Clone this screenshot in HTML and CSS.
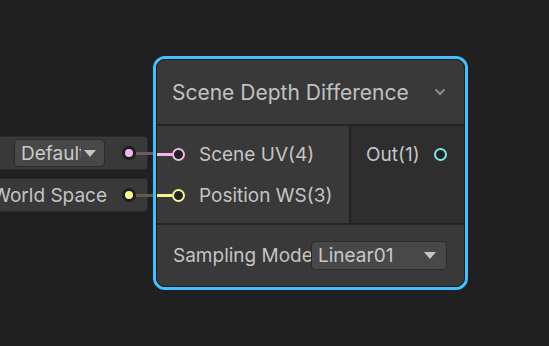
FILE: index.html
```html
<!DOCTYPE html>
<html>
<head>
    <title>Scene Depth Difference</title>
    <link rel="stylesheet" href="styles.css">
</head>
<body>
    <div class="canvas">
        <div class="stubs">
            <div class="stub">
                <div class="dropdown small">
                    <span class="dd-text">Default</span>
                    <span class="tri"></span>
                </div>
                <span class="dot pink"></span>
                <span class="wire pink-dim"></span>
            </div>
            <div class="stub">
                <span class="stub-label">World Space</span>
                <span class="dot yellow"></span>
                <span class="wire yellow-dim"></span>
            </div>
        </div>

        <div class="node">
            <div class="node-inner">
                <div class="header">
                    <span class="title">Scene Depth Difference</span>
                    <svg class="chevron" width="12" height="8" viewBox="0 0 12 8">
                        <polyline points="1.5,1.5 6,6 10.5,1.5" fill="none" stroke="#8c8c8c" stroke-width="2"/>
                    </svg>
                </div>
                <div class="ports">
                    <div class="inputs">
                        <div class="port-row">
                            <span class="edge pink-line"></span>
                            <span class="port pink-ring"></span>
                            <span class="port-label">Scene UV(4)</span>
                        </div>
                        <div class="port-row">
                            <span class="edge yellow-line"></span>
                            <span class="port yellow-ring"></span>
                            <span class="port-label">Position WS(3)</span>
                        </div>
                    </div>
                    <div class="outputs">
                        <div class="port-row out">
                            <span class="port-label">Out(1)</span>
                            <span class="port cyan-ring"></span>
                        </div>
                    </div>
                </div>
                <div class="settings">
                    <span class="setting-label">Sampling Mode</span>
                    <div class="dropdown wide">
                        <span class="dd-text">Linear01</span>
                        <span class="tri"></span>
                    </div>
                </div>
            </div>
        </div>
    </div>
</body>
</html>
```

FILE: styles.css
```css
body { margin: 0; background: #202020; font-family: Inter, "Noto Sans", sans-serif; color: #c4c4c4; overflow: hidden; }
.canvas { position: relative; width: 549px; height: 346px; }

/* inline value stubs left of the node */
.stubs { position: absolute; left: -10px; top: 136px; width: 158px; display: flex; flex-direction: column; gap: 8px; }
.stub { position: relative; height: 34px; box-sizing: border-box; background: #393939; border: 1px solid #2a2a2a; border-left: none; border-radius: 0 4px 4px 0; display: flex; align-items: center; justify-content: flex-end; padding-right: 11px; font-size: 19px; }
.stub-label { margin-right: 15px; white-space: nowrap; }
.dot { position: relative; z-index: 2; width: 14px; height: 14px; border-radius: 50%; background: #1f1f1f; display: flex; align-items: center; justify-content: center; }
.dot::after { content: ""; width: 8px; height: 8px; border-radius: 50%; }
.dot.pink::after { background: #f4b6ea; }
.dot.yellow::after { background: #f4f58e; }
.wire { position: absolute; left: calc(100% - 11px); top: 50%; margin-top: -1.5px; width: 20px; height: 3px; z-index: 1; }
.pink-dim { background: #6c5a68; }
.yellow-dim { background: #5e5e47; }

.dropdown { box-sizing: border-box; background: #484848; border: 1px solid #2b2b2b; border-radius: 4px; display: flex; align-items: center; padding-left: 6px; font-size: 19px; color: #c8c8c8; }
.dropdown .dd-text { flex: 1; overflow: hidden; white-space: nowrap; }
.tri { width: 0; height: 0; border-left: 6px solid transparent; border-right: 6px solid transparent; border-top: 7px solid #c4c4c4; margin-left: 3px; }
.small { width: 91px; height: 28px; margin-right: 17px; padding-right: 8px; }
.wide { width: 136px; height: 29px; padding-right: 10px; flex-shrink: 0; }

/* node */
.node { position: absolute; left: 153px; top: 56px; width: 315px; height: 234px; box-sizing: border-box; border: 3px solid #44c0ff; border-radius: 12px; z-index: 3; }
.node-inner { height: 100%; box-sizing: border-box; border: 1px solid #1b1b1b; border-radius: 9px; overflow: hidden; display: flex; flex-direction: column; }
.header { height: 64px; flex-shrink: 0; background: #393939; border-bottom: 2px solid #232323; display: flex; align-items: center; padding-left: 15px; padding-right: 18px; }
.title { font-size: 21px; color: #c1c1c1; white-space: nowrap; }
.chevron { margin-left: auto; }

.ports { height: 97px; flex-shrink: 0; display: flex; }
.inputs { width: 192px; background: #393939; border-right: 2px solid #232323; padding-top: 8px; }
.outputs { flex: 1; background: #2e2e2e; padding-top: 8px; }
.port-row { height: 41px; display: flex; align-items: center; font-size: 19px; }
.port-label { white-space: nowrap; }
.edge { width: 15px; height: 3px; }
.pink-line { background: #f4b6ea; }
.yellow-line { background: #f4f58e; }
.port { width: 13px; height: 13px; box-sizing: border-box; border-radius: 50%; border: 2px solid; background: #232323; margin-right: 14px; }
.pink-ring { border-color: #f4b6ea; }
.yellow-ring { border-color: #f4f58e; }
.out { padding-left: 15px; padding-right: 17px; }
.out .port { margin: 0 0 0 auto; }
.cyan-ring { border-color: #84e3e8; }

.settings { flex: 1; background: #393939; border-top: 2px solid #232323; display: flex; align-items: center; padding-left: 16px; }
.setting-label { width: 138px; flex-shrink: 0; overflow: hidden; white-space: nowrap; font-size: 19px; }
```
